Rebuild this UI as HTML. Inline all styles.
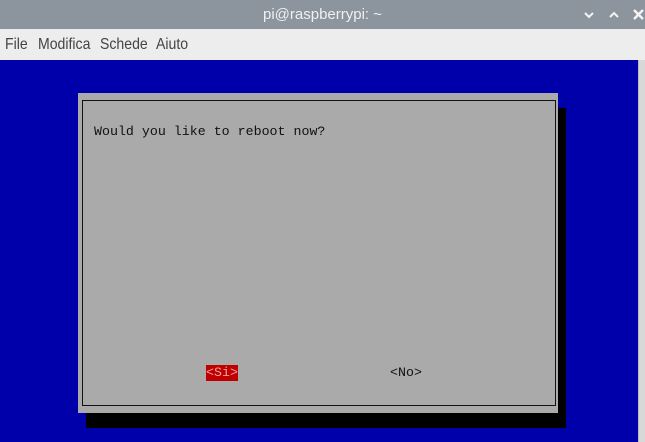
<!DOCTYPE html>
<html><head><style>
body{margin:0;width:645px;height:442px;overflow:hidden;position:relative;background:#0000aa;font-family:"Liberation Sans",sans-serif}
#tb{position:absolute;left:0;top:0;width:645px;height:29px;background:#8c959d;color:#eef0f2;font-size:15px;text-align:center;line-height:29px}
#mb{position:absolute;left:0;top:29px;width:645px;height:31px;background:#ededed;color:#444;font-size:16px;line-height:31px}
#mb span{position:absolute;top:0;transform:scaleX(0.88);transform-origin:0 50%}
#term{position:absolute;left:0;top:60px;width:638px;height:382px;background:#0000aa}
#sb{position:absolute;left:638px;top:60px;width:7px;height:382px;background:#d8d8d8;border-left:1px solid #bbb}
.a{position:absolute}
.mono{font-family:"Liberation Mono",monospace;font-size:13.3px;color:#111}
</style></head><body>
<div id="tb">pi@raspberrypi: ~
<svg class="a" style="left:583px;top:10px" width="12" height="10"><path d="M2 3 L6 7 L10 3" stroke="#f4f4f4" stroke-width="2" fill="none"/></svg>
<svg class="a" style="left:608px;top:10px" width="12" height="10"><path d="M2 7 L6 3 L10 7" stroke="#f4f4f4" stroke-width="2" fill="none"/></svg>
<svg class="a" style="left:632px;top:8px" width="13" height="13"><path d="M2 2 L11 11 M11 2 L2 11" stroke="#f4f4f4" stroke-width="2.4" fill="none"/></svg>
</div>
<div id="mb"><span style="left:5px">File</span><span style="left:38px">Modifica</span><span style="left:100px">Schede</span><span style="left:156px">Aiuto</span></div>
<div id="term"></div>
<div id="sb"></div>
<div class="a" style="left:86px;top:108px;width:480px;height:320px;background:#000"></div>
<div class="a" style="left:78px;top:93px;width:480px;height:320px;background:#aaaaaa"></div>
<div class="a" style="left:82px;top:100px;width:472px;height:304px;border:1px solid #111"></div>
<div class="a mono" style="left:94px;top:124px">Would you like to reboot now?</div>
<div class="a mono" style="left:206px;top:365px;width:32px;height:16px;background:#c00000;color:#f0a0a0;line-height:16px">&lt;Si&gt;</div>
<div class="a mono" style="left:390px;top:365px;line-height:16px">&lt;No&gt;</div>
</body></html>
